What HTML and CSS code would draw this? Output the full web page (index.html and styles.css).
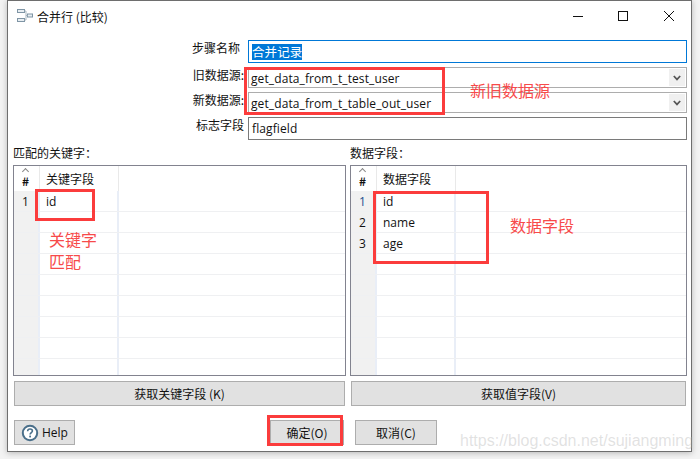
FILE: index.html
```html
<!DOCTYPE html>
<html lang="zh">
<head>
<meta charset="utf-8">
<title>合并行 (比较)</title>
<link rel="stylesheet" href="styles.css">
</head>
<body>
<div class="window">
  <div class="titlebar">
    <svg class="appicon" width="16" height="14" viewBox="0 0 16 14"><g fill="#e8eef2" stroke="#7f95a5"><rect x="0.5" y="0.5" width="7" height="3"/><rect x="0.5" y="9.5" width="7" height="3"/><rect x="10.5" y="5" width="5" height="3"/></g><path d="M7.5 2H9V11H7.5M9 6.5H10.5" fill="none" stroke="#a9b7c1"/></svg>
    <span class="title">合并行 (比较)</span>
    <div class="winctl">
      <svg width="12" height="12" viewBox="0 0 12 12"><path d="M0 6.5H10" stroke="#111" fill="none"/></svg>
      <svg width="12" height="12" viewBox="0 0 12 12"><rect x="0.5" y="1.5" width="9" height="9" stroke="#111" fill="none"/></svg>
      <svg width="12" height="12" viewBox="0 0 12 12"><path d="M1 1L11 11M11 1L1 11" stroke="#111" fill="none"/></svg>
    </div>
  </div>

  <div class="form">
    <label class="flabel first">步骤名称</label>
    <div class="input focused"><span class="sel">合并记录</span></div>
    <label class="flabel">旧数据源:</label>
    <div class="input combo"><span>get_data_from_t_test_user</span><span class="arrow"><svg width="8" height="6" viewBox="0 0 8 6"><path d="M0.8 1L4 4.4L7.2 1" stroke="#555" stroke-width="1.7" fill="none"/></svg></span></div>
    <label class="flabel">新数据源:</label>
    <div class="input combo"><span>get_data_from_t_table_out_user</span><span class="arrow"><svg width="8" height="6" viewBox="0 0 8 6"><path d="M0.8 1L4 4.4L7.2 1" stroke="#555" stroke-width="1.7" fill="none"/></svg></span></div>
    <label class="flabel">标志字段</label>
    <div class="input plain"><span>flagfield</span></div>
  </div>

  <div class="panels">
    <section class="panel left">
      <div class="caption">匹配的关键字：</div>
      <div class="table">
        <div class="row head"><div class="c-num"><span class="caret"></span>#</div><div class="c-main">关键字段</div><div class="c-rest"></div></div>
        <div class="row"><div class="c-num">1</div><div class="c-main">id</div><div class="c-rest"></div></div>
        <div class="row"><div class="c-num"></div><div class="c-main"></div><div class="c-rest"></div></div>
        <div class="row"><div class="c-num"></div><div class="c-main"></div><div class="c-rest"></div></div>
        <div class="row"><div class="c-num"></div><div class="c-main"></div><div class="c-rest"></div></div>
        <div class="row"><div class="c-num"></div><div class="c-main"></div><div class="c-rest"></div></div>
        <div class="row"><div class="c-num"></div><div class="c-main"></div><div class="c-rest"></div></div>
        <div class="row"><div class="c-num"></div><div class="c-main"></div><div class="c-rest"></div></div>
        <div class="row"><div class="c-num"></div><div class="c-main"></div><div class="c-rest"></div></div>
        <div class="row last"><div class="c-num"></div><div class="c-main"></div><div class="c-rest"></div></div>
      </div>
      <button class="btn wide">获取关键字段 (K)</button>
    </section>
    <section class="panel right">
      <div class="caption">数据字段：</div>
      <div class="table">
        <div class="row head"><div class="c-num"><span class="caret"></span>#</div><div class="c-main">数据字段</div><div class="c-rest"></div></div>
        <div class="row"><div class="c-num blue">1</div><div class="c-main">id</div><div class="c-rest"></div></div>
        <div class="row"><div class="c-num">2</div><div class="c-main">name</div><div class="c-rest"></div></div>
        <div class="row"><div class="c-num">3</div><div class="c-main">age</div><div class="c-rest"></div></div>
        <div class="row"><div class="c-num"></div><div class="c-main"></div><div class="c-rest"></div></div>
        <div class="row"><div class="c-num"></div><div class="c-main"></div><div class="c-rest"></div></div>
        <div class="row"><div class="c-num"></div><div class="c-main"></div><div class="c-rest"></div></div>
        <div class="row"><div class="c-num"></div><div class="c-main"></div><div class="c-rest"></div></div>
        <div class="row"><div class="c-num"></div><div class="c-main"></div><div class="c-rest"></div></div>
        <div class="row last"><div class="c-num"></div><div class="c-main"></div><div class="c-rest"></div></div>
      </div>
      <button class="btn wide">获取值字段(V)</button>
    </section>
  </div>

  <div class="footer">
    <button class="btn help">
      <svg width="18" height="18" viewBox="0 0 18 18"><circle cx="9" cy="9" r="7.2" fill="#fff" stroke="#4a6f8a" stroke-width="2"/><path d="M6.6 7.2C6.7 5.6 7.8 5 9 5C10.4 5 11.4 5.8 11.4 7C11.4 8.5 9.1 8.7 9.1 10.5" fill="none" stroke="#4a6f8a" stroke-width="1.6"/><rect x="8.2" y="11.6" width="1.8" height="1.8" fill="#4a6f8a"/></svg>
      <span>Help</span>
    </button>
    <button class="btn ok">确定(O)</button>
    <button class="btn cancel">取消(C)</button>
  </div>
</div>

<div class="mark box-src"></div>
<div class="mark box-key"></div>
<div class="mark box-data"></div>
<div class="mark box-ok"></div>
<div class="note note-src">新旧数据源</div>
<div class="note note-key">关键字<br>匹配</div>
<div class="note note-data">数据字段</div>
<div class="watermark">https://blog.csdn.net/sujiangming</div>
</body>
</html>
```

FILE: styles.css
```css
* { box-sizing: border-box; }
html, body { margin: 0; padding: 0; }
body {
  position: relative;
  width: 700px;
  height: 459px;
  overflow: hidden;
  background: #f3f3f3;
  font-family: "Noto Sans CJK SC", "Noto Sans", sans-serif;
  font-size: 12px;
  color: #111;
}
.window {
  width: 685px;
  height: 452px;
  margin-left: 7px;
  background: #fff;
  border: 1px solid #6e6e6e;
  box-shadow: 0 1px 6px rgba(0,0,0,.25);
  display: flex;
  flex-direction: column;
}
.titlebar {
  height: 30px;
  display: flex;
  align-items: center;
  padding-left: 9px;
  flex: none;
}
.appicon { margin-right: 4px; }
.title { font-size: 12px; margin-top: 1px; }
.winctl {
  margin-left: auto;
  margin-right: 16px;
  display: flex;
  gap: 33px;
}
.form {
  margin-top: 9px;
  display: grid;
  grid-template-columns: 236px 439px;
  grid-template-rows: 27px 25px 25px 24px;
  column-gap: 4px;
  flex: none;
}
.flabel {
  text-align: right;
  line-height: 16px;
  white-space: nowrap;
  font-size: 12px;
}
.flabel.first { padding-right: 4px; }
.input {
  height: 23px;
  width: 439px;
  border: 1px solid #adadad;
  display: flex;
  align-items: center;
  padding-left: 3px;
  font-family: "Open Sans", "Noto Sans", sans-serif;
  font-size: 12px;
  letter-spacing: .1px;
  background: #fff;
}
.focused { border-color: #0078d7; font-family: "Noto Sans CJK SC", sans-serif; }
.sel { background: #0078d7; color: #fff; line-height: 16px; font-size: 12.5px; }
.combo { height: 21px; padding-left: 2px; padding-right: 1px; }
.combo > span:first-child { margin-top: 1px; }
.plain { height: 23px; border-color: #7a7a7a; }
.arrow {
  margin-left: auto;
  width: 16px;
  height: 17px;
  background: #f0f0f0;
  display: flex;
  align-items: center;
  justify-content: center;
}
.panels {
  display: flex;
  gap: 4px;
  padding-left: 5px;
  margin-top: 3px;
  flex: none;
}
.panel { display: flex; flex-direction: column; }
.panel.left { width: 333px; }
.panel.right { width: 337px; }
.caption { height: 21px; padding-top: 1px; line-height: 16px; font-size: 12px; }
.table {
  height: 211px;
  border: 1px solid #82838f;
  overflow: hidden;
  display: flex;
  flex-direction: column;
}
.row {
  flex: none;
  height: 21px;
  display: flex;
  border-bottom: 1px solid #eff0f2;
  font-family: "Open Sans", "Noto Sans", sans-serif;
  font-size: 12px;
  line-height: 21px;
}
.row.head {
  height: 25px;
  border-bottom: 0;
  font-family: "Noto Sans CJK SC", sans-serif;
  line-height: 25px;
  font-size: 12px;
}
.row.last { border-bottom: 0; }
.c-num {
  position: relative;
  width: 26px;
  background: #f1f1f1;
  text-align: left;
  padding-left: 8px;
  border-right: 2px solid #e9eef7;
  flex: none;
}
.head .c-num { background: #fff; border-right: 1px solid #e9e9e9; font-weight: 700; padding-left: 8px; padding-top: 2px; }
.c-main {
  width: 79px;
  padding-left: 6px;
  border-right: 2px solid #e9eef7;
  flex: none;
}
.head .c-main { border-right: 1px solid #e9e9e9; }
.c-rest { flex: 1; }
.blue { color: #1c4f8f; }
.caret {
  position: absolute;
  left: 9px;
  top: 3px;
  width: 5px;
  height: 5px;
  border-left: 1px solid #888;
  border-top: 1px solid #888;
  transform: rotate(45deg);
}
.btn {
  display: flex;
  align-items: center;
  justify-content: center;
  background: #e1e1e1;
  border: 1px solid #adadad;
  font-family: "Noto Sans CJK SC", "Noto Sans", sans-serif;
  font-size: 12px;
  color: #111;
  padding: 0;
  height: 25px;
  cursor: default;
}
.wide { margin-top: 5px; margin-left: 1px; }
.panel.right .wide { margin-left: 1px; width: 335px; }
.panel.left .wide { width: 331px; }
.footer {
  display: flex;
  margin-top: 14px;
  padding-left: 6px;
  flex: none;
}
.help { width: 61px; gap: 3px; justify-content: flex-start; padding-left: 6px; font-family: "Open Sans", sans-serif; }
.ok { width: 74px; margin-left: 195px; }
.cancel { width: 82px; margin-left: 11px; }

.mark { position: absolute; border: 3px solid #fb3c3c; }
.box-src { left: 244px; top: 67px; width: 201px; height: 48px; }
.box-key { left: 35px; top: 189px; width: 60px; height: 32px; }
.box-data { left: 373px; top: 191px; width: 116px; height: 73px; }
.box-ok { left: 267px; top: 415px; width: 76px; height: 31px; }
.note {
  position: absolute;
  color: #f74a4a;
  font-size: 16px;
  line-height: 22px;
  white-space: nowrap;
}
.note-src { left: 470px; top: 79px; }
.note-key { left: 49px; top: 228px; }
.note-data { left: 510px; top: 214px; }
.watermark {
  position: absolute;
  left: 460px;
  top: 431px;
  font-family: "Liberation Sans", sans-serif;
  font-size: 16px;
  line-height: 20px;
  color: rgba(170,170,170,.35);
  white-space: nowrap;
}
```
